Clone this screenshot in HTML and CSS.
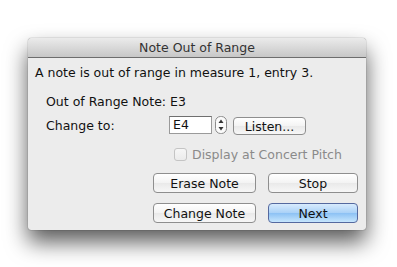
FILE: index.html
```html
<!DOCTYPE html>
<html>
<head>
<meta charset="utf-8">
<link rel="stylesheet" href="styles.css">
</head>
<body>
<div class="window">
  <div class="titlebar">Note Out of Range</div>
  <div class="content">
    <div class="message">A note is out of range in measure 1, entry 3.</div>
    <div class="form">
      <div class="row-note">Out of Range Note: E3</div>
      <div class="row-change">
        <span class="label">Change to:</span>
        <span class="field">E4</span>
        <span class="stepper">
          <svg width="12" height="18" viewBox="0 0 12 18">
            <rect x="0.5" y="0.5" width="11" height="17" rx="5" ry="5" fill="#fafafa" stroke="#8c8c8c"/>
            <path d="M3.5 7 L6 3.5 L8.5 7 Z" fill="#333"/>
            <path d="M3.5 11 L6 14.5 L8.5 11 Z" fill="#333"/>
          </svg>
        </span>
        <span class="btn btn-small">Listen...</span>
      </div>
      <div class="row-check">
        <span class="checkbox"></span>
        <span class="check-label">Display at Concert Pitch</span>
      </div>
    </div>
    <div class="buttons">
      <span class="btn btn-left">Erase Note</span>
      <span class="btn btn-right">Stop</span>
      <span class="btn btn-left">Change Note</span>
      <span class="btn btn-right btn-default">Next</span>
    </div>
  </div>
</div>
</body>
</html>
```
FILE: styles.css
```css
html, body {
  margin: 0;
  padding: 0;
  background: #ffffff;
}
body {
  min-height: 267px;
  box-sizing: border-box;
  padding: 38px 0 0 28px;
  font-family: "DejaVu Sans", "Liberation Sans", sans-serif;
  font-size: 12.5px;
  color: #111;
}
.window {
  width: 338px;
  height: 192px;
  background: #ececec;
  border-radius: 4px 4px 3px 3px;
  box-shadow: 0 12px 22px rgba(0,0,0,0.65), 0 0 1px rgba(0,0,0,0.7);
  display: flex;
  flex-direction: column;
  overflow: hidden;
}
.titlebar {
  height: 19px;
  line-height: 19px;
  text-align: center;
  color: #333;
  font-size: 12.5px;
  background: linear-gradient(#ebebeb, #c7c7c7);
  border-bottom: 1px solid #6d6d6d;
  flex: none;
}
.content {
  display: flex;
  flex-direction: column;
  padding: 7px 0 0 7px;
}
.message {
  height: 16px;
  line-height: 16px;
}
.form {
  display: flex;
  flex-direction: column;
  padding-left: 11px;
  margin-top: 13px;
}
.row-note {
  height: 16px;
  line-height: 16px;
}
.row-change {
  display: flex;
  align-items: center;
  margin-top: 5px;
  height: 20px;
}
.label {
  width: 123px;
}
.field {
  width: 43px;
  height: 18px;
  box-sizing: border-box;
  background: #fff;
  border: 1px solid #9a9a9a;
  border-top-color: #6f6f6f;
  padding-left: 3px;
  line-height: 16px;
}
.stepper {
  display: flex;
  margin-left: 3px;
  margin-top: -1px;
}
.btn {
  display: flex;
  align-items: center;
  justify-content: center;
  box-sizing: border-box;
  border: 1px solid #8e8e8e;
  border-radius: 4px;
  background: linear-gradient(#ffffff, #f3f3f3 50%, #e9e9e9 51%, #f7f7f7);
  color: #111;
}
.btn-small {
  margin-left: 6px;
  width: 73px;
  height: 18px;
  margin-top: 2px;
}
.row-check {
  display: flex;
  align-items: center;
  margin-top: 12px;
  margin-left: 128px;
  height: 15px;
}
.checkbox {
  width: 13px;
  height: 13px;
  box-sizing: border-box;
  border: 1px solid #c4c4c4;
  border-radius: 3px;
  background: linear-gradient(#f6f6f6, #ebebeb);
}
.check-label {
  margin-left: 5px;
  color: #8a8a8a;
}
.buttons {
  display: grid;
  grid-template-columns: 103px 90px;
  column-gap: 12px;
  row-gap: 10px;
  margin-top: 11px;
  margin-left: 118px;
}
.buttons .btn {
  height: 20px;
}
.btn-default {
  border-color: #55699f;
  background: linear-gradient(#d8ebfd, #a9d1f7 50%, #8cc1f4 51%, #c6e6fd);
}
```
